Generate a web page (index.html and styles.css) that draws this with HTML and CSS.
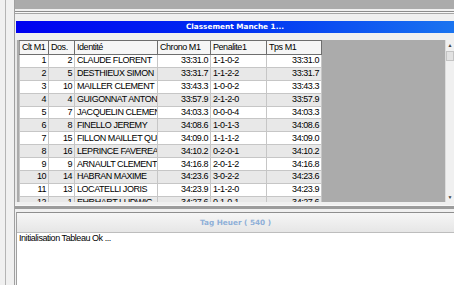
FILE: index.html
```html
<!DOCTYPE html>
<html lang="fr">
<head>
<meta charset="UTF-8">
<title>Classement Manche 1</title>
<link rel="stylesheet" href="styles.css">
</head>
<body>

<div class="window">
  <div class="side"></div>

  <div class="main">
    <div class="top-panel"></div>
    <div class="splitter"></div>

    <div class="title-bar">Classement Manche 1...</div>

    <div class="grid-wrap">
      <div class="grid">
        <table>
          <colgroup>
            <col class="c-clt"><col class="c-dos"><col class="c-id">
            <col class="c-chrono"><col class="c-pen"><col class="c-tps">
          </colgroup>
          <thead>
            <tr>
              <th>Clt M1</th>
              <th>Dos.</th>
              <th>Identité</th>
              <th>Chrono M1</th>
              <th>Penalite1</th>
              <th>Tps M1</th>
            </tr>
          </thead>
          <tbody>
            <tr><td class="num">1</td><td class="num">2</td><td>CLAUDE FLORENT</td><td class="num">33:31.0</td><td>1-1-0-2</td><td class="num">33:31.0</td></tr>
            <tr><td class="num">2</td><td class="num">5</td><td>DESTHIEUX SIMON</td><td class="num">33:31.7</td><td>1-1-2-2</td><td class="num">33:31.7</td></tr>
            <tr><td class="num">3</td><td class="num">10</td><td>MAILLER CLEMENT</td><td class="num">33:43.3</td><td>1-0-0-2</td><td class="num">33:43.3</td></tr>
            <tr><td class="num">4</td><td class="num">4</td><td>GUIGONNAT ANTONIN</td><td class="num">33:57.9</td><td>2-1-2-0</td><td class="num">33:57.9</td></tr>
            <tr><td class="num">5</td><td class="num">7</td><td>JACQUELIN CLEMENT</td><td class="num">34:03.3</td><td>0-0-0-4</td><td class="num">34:03.3</td></tr>
            <tr><td class="num">6</td><td class="num">8</td><td>FINELLO JEREMY</td><td class="num">34:08.6</td><td>1-0-1-3</td><td class="num">34:08.6</td></tr>
            <tr><td class="num">7</td><td class="num">15</td><td>FILLON MAILLET QUENTIN</td><td class="num">34:09.0</td><td>1-1-1-2</td><td class="num">34:09.0</td></tr>
            <tr><td class="num">8</td><td class="num">16</td><td>LEPRINCE FAVEREAU</td><td class="num">34:10.2</td><td>0-2-0-1</td><td class="num">34:10.2</td></tr>
            <tr><td class="num">9</td><td class="num">9</td><td>ARNAULT CLEMENT</td><td class="num">34:16.8</td><td>2-0-1-2</td><td class="num">34:16.8</td></tr>
            <tr><td class="num">10</td><td class="num">14</td><td>HABRAN MAXIME</td><td class="num">34:23.6</td><td>3-0-2-2</td><td class="num">34:23.6</td></tr>
            <tr><td class="num">11</td><td class="num">13</td><td>LOCATELLI JORIS</td><td class="num">34:23.9</td><td>1-1-2-0</td><td class="num">34:23.9</td></tr>
            <tr><td class="num">12</td><td class="num">1</td><td>EHRHART LUDWIG</td><td class="num">34:27.6</td><td>0-1-0-1</td><td class="num">34:27.6</td></tr>
          </tbody>
        </table>
      </div>
      <div class="vscroll">
        <div class="arrow">&#9650;</div>
        <div class="thumb"></div>
        <div class="track"></div>
        <div class="arrow">&#9660;</div>
      </div>
    </div>

    <div class="splitter2"></div>

    <div class="log-panel">
      <div class="log-head">Tag Heuer ( 540 )</div>
      <div class="log-body">Initialisation Tableau Ok ...</div>
    </div>
  </div>
</div>

</body>
</html>
```

FILE: styles.css
```css
html, body { margin:0; padding:0; }
body {
    width:454px; height:285px; overflow:hidden;
    background:#f0f0f0;
    font-family:"Liberation Sans", Arial, sans-serif;
    font-size:9px;
    letter-spacing:-0.45px;
    color:#000;
}

.window { display:flex; height:285px; }

.side {
    width:8px;
    margin-left:5px;
    border-left:1px solid #b4b4b4;
    border-right:1px solid #a0a0a0;
    background:#f0f0f0;
}

.main { flex:1; display:flex; flex-direction:column; min-width:0; }

.top-panel { height:9px; background:#ababab; }

.splitter {
    height:1px;
    margin-top:2px;
    border-top:1px solid #8c8c8c;
    border-bottom:1px solid #a6a6a6;
    background:#f8f8f8;
}

.title-bar {
    margin:7px 0 0 1px;
    height:12px;
    line-height:12px;
    background:linear-gradient(to right, #0000f0, #0030f2 50%, #1a74f0);
    color:white;
    font-family:"DejaVu Sans", Verdana, sans-serif;
    font-weight:bold;
    font-size:7.3px;
    letter-spacing:0;
    text-align:center;
}

.grid-wrap {
    margin-top:7px;
    height:162px;
    display:flex;
    background:#ababab;
    border-left:2px solid #e8e8e8;
}

.grid { flex:1; overflow:hidden; padding-left:2px; }

table {
    border-collapse:collapse;
    table-layout:fixed;
    width:302px;
    background:white;
}
.c-clt { width:29px; }
.c-dos { width:26px; }
.c-id { width:83px; }
.c-chrono { width:53px; }
.c-pen { width:56px; }
.c-tps { width:55px; }

th, td {
    white-space:nowrap;
    overflow:hidden;
    text-overflow:clip;
    padding:0 2px;
    font-weight:normal;
    text-align:left;
}
thead tr { height:14px; }
th {
    background:#f6f6f6;
    border:1px solid #6e6e6e;
    border-left-color:#9a9a9a;
    line-height:11px;
}
tbody tr { height:12.9px; }
td {
    line-height:11px;
    border:1px solid #c6c6c6;
}
tbody tr:nth-child(even) td { background:#e8e8e8; }
td.num { text-align:right; }

.vscroll {
    width:8px;
    display:flex;
    flex-direction:column;
    background:#f0f0f0;
    border-left:1px solid #dcdcdc;
    padding-top:1px;
}
.arrow {
    height:9px;
    font-size:5px;
    line-height:9px;
    letter-spacing:0;
    text-align:center;
    color:#444;
}
.thumb {
    height:10px;
    margin:1px 0;
    background:#e2e2e2;
    border:1px solid #c4c4c4;
    box-sizing:border-box;
}
.track { flex:1; }

.splitter2 {
    height:3px;
    margin-top:3px;
    border-top:1px solid #f8f8f8;
    background:#9c9c9c;
    margin-bottom:3px;
}

.log-panel {
    flex:1;
    display:flex;
    flex-direction:column;
    border-top:1px solid #8e8e8e;
    border-left:1px solid #a0a0a0;
    margin-left:1px;
}
.log-head {
    height:19px;
    line-height:19px;
    background:linear-gradient(#f6f6f6, #e6e6e6);
    border-bottom:1px solid #bdbdbd;
    color:#8fb0d8;
    font-family:"DejaVu Sans", Verdana, sans-serif;
    font-weight:bold;
    font-size:7.3px;
    letter-spacing:0;
    text-align:center;
}
.log-body {
    flex:1;
    background:white;
    padding:0 2px;
    line-height:11px;
}
```
